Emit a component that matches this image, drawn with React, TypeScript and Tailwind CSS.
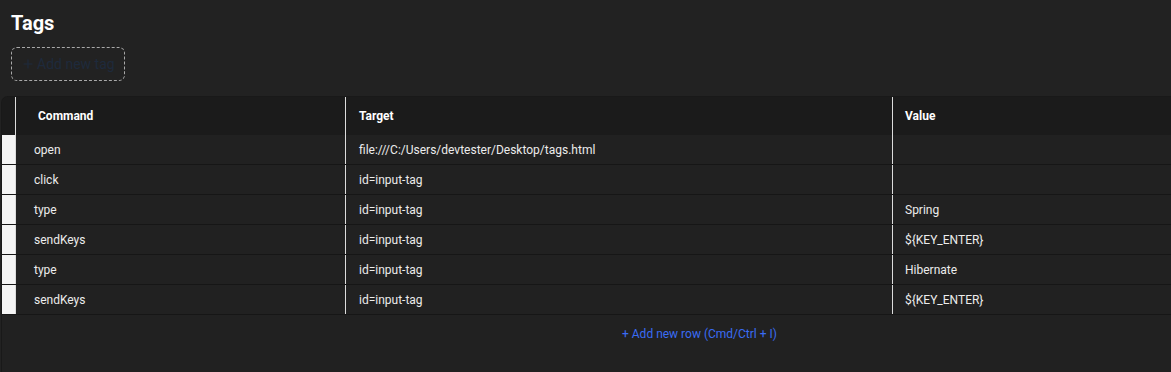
import { Plus } from 'lucide-react'

type Step = {
  command: string
  target: string
  value: string
}

const steps: Step[] = [
  { command: 'open', target: 'file:///C:/Users/devtester/Desktop/tags.html', value: '' },
  { command: 'click', target: 'id=input-tag', value: '' },
  { command: 'type', target: 'id=input-tag', value: 'Spring' },
  { command: 'sendKeys', target: 'id=input-tag', value: '${KEY_ENTER}' },
  { command: 'type', target: 'id=input-tag', value: 'Hibernate' },
  { command: 'sendKeys', target: 'id=input-tag', value: '${KEY_ENTER}' },
]

export default function App() {
  return (
    <div
      className="h-screen overflow-hidden bg-[#222222] text-[#ececec]"
      style={{ fontFamily: 'Roboto, "Liberation Sans", sans-serif' }}
    >
      <div className="px-[11px] pt-[9px]">
        <h1 className="text-[20px] font-bold leading-[28px] text-white">Tags</h1>
        <button
          type="button"
          className="mt-[10px] flex h-[34px] w-[114px] items-center gap-[2px] rounded-[6px] border border-dashed border-[#a9a9a9] pl-[9px] text-[14px] text-[#1e2a3c]"
        >
          <Plus size={14} strokeWidth={2} />
          Add new tag
        </button>
      </div>

      <div className="ml-[1px] mt-[15px] h-[300px] overflow-hidden rounded-tl-[7px] border-l border-t border-[#191919] bg-[#212121]">
        <div className="flex h-[38px] bg-[#1b1b1b] text-[12px] font-bold text-white">
          <div className="w-[14px] shrink-0 border-r border-[#dcdcdc]" />
          <div className="flex w-[330px] shrink-0 items-center border-r border-[#dcdcdc] pl-[22px]">Command</div>
          <div className="flex w-[547px] shrink-0 items-center border-r border-[#dcdcdc] pl-[13px]">Target</div>
          <div className="flex flex-1 items-center pl-[12px]">Value</div>
        </div>

        {steps.map((step, i) => (
          <div key={i} className="flex h-[30px] border-b border-[#161616] text-[12px] text-[#ececec]">
            <div className="w-[14px] shrink-0 border-r border-[#dcdcdc] bg-[#f4f4f4]" />
            <div className="flex w-[330px] shrink-0 items-center border-r border-[#dcdcdc] pl-[18px]">
              {step.command}
            </div>
            <div className="flex w-[547px] shrink-0 items-center border-r border-[#dcdcdc] pl-[13px]">
              {step.target}
            </div>
            <div className="flex flex-1 items-center pl-[12px]">{step.value}</div>
          </div>
        ))}

        <div className="pl-[620px] pt-[10px] text-[12px] leading-[18px] text-[#3a6cf4]">
          + Add new row (Cmd/Ctrl + I)
        </div>
      </div>
    </div>
  )
}
